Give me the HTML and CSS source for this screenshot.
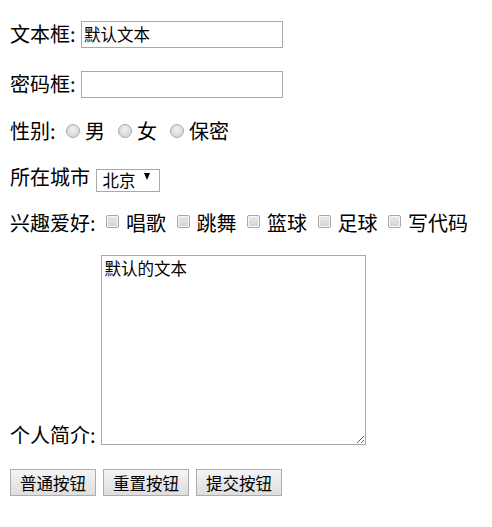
FILE: index.html
```html
<!DOCTYPE html>
<html lang="zh-CN">
<head>
<meta charset="utf-8">
<title>表单</title>
<link rel="stylesheet" href="styles.css">
</head>
<body>
<form class="form">
  <div class="row row-input">文本框:&nbsp;<input class="field" type="text" value="默认文本"></div>
  <div class="row row-input">密码框:&nbsp;<input class="field" type="password"></div>
  <div class="row row-radio">性别:&nbsp;<input class="radio" type="radio" name="sex">男&nbsp;<input class="radio" type="radio" name="sex">女&nbsp;<input class="radio" type="radio" name="sex">保密</div>
  <div class="row row-select">所在城市&nbsp;<span class="select-wrap"><select class="select"><option>北京</option><option>上海</option><option>广州</option></select></span></div>
  <div class="row row-check">兴趣爱好:&nbsp;<input class="check" type="checkbox">唱歌&nbsp;<input class="check" type="checkbox">跳舞&nbsp;<input class="check" type="checkbox">篮球&nbsp;<input class="check" type="checkbox">足球&nbsp;<input class="check" type="checkbox">写代码</div>
  <div class="row row-area"><span class="area-label">个人简介:</span><textarea class="area">默认的文本</textarea></div>
  <div class="row row-buttons">
    <button class="btn" type="button">普通按钮</button>
    <button class="btn" type="reset">重置按钮</button>
    <button class="btn" type="submit">提交按钮</button>
  </div>
</form>
</body>
</html>
```

FILE: styles.css
```css
html, body {
  margin: 0;
  padding: 0;
}

body {
  font-family: "Noto Sans CJK SC", "Noto Sans", sans-serif;
  font-size: 20px;
  line-height: 26px;
  color: #000;
  background: #fff;
}

.form {
  display: flex;
  flex-direction: column;
  gap: 20px;
  margin: 0;
  padding: 19px 10px 0 10px;
}

.row {
  display: flex;
  align-items: center;
  white-space: nowrap;
}

.row-input { height: 30px; }
.row-radio { height: 24px; }
.row-select { height: 28px; }
.row-check { height: 24px; }
.row-area {
  align-items: flex-end;
  height: 190px;
}
.row-buttons {
  gap: 7px;
  height: 27px;
  margin-top: 4px;
}

.field {
  box-sizing: border-box;
  width: 202px;
  height: 27px;
  margin: 0 0 0 1px;
  padding: 1px 2px;
  border: 1px solid #a9a9a9;
  font-family: "Noto Sans CJK SC", sans-serif;
  font-size: 16.5px;
  color: #000;
  outline: none;
}

.radio {
  appearance: none;
  -webkit-appearance: none;
  box-sizing: border-box;
  flex: none;
  width: 14px;
  height: 14px;
  margin: 0 5px 1px 6px;
  border: 1px solid #a9a9a9;
  border-radius: 50%;
  background: radial-gradient(circle at 50% 40%, #f2f2f2 0%, #d8d8d8 70%, #cbcbcb 100%);
}

.radio ~ .radio {
  margin-left: 8.5px;
}

.check {
  appearance: none;
  -webkit-appearance: none;
  box-sizing: border-box;
  flex: none;
  width: 13px;
  height: 13px;
  margin: 0 7px 3px 6px;
  border: 1px solid #a8a8a8;
  border-radius: 2px;
  background: linear-gradient(#e9e9e9, #d3d3d3);
  box-shadow: inset 0 0 0 1px #f7f7f7;
}

.select-wrap {
  position: relative;
  display: inline-block;
  margin-left: 2px;
  height: 23px;
}

.select {
  appearance: none;
  -webkit-appearance: none;
  box-sizing: border-box;
  width: 64px;
  height: 23px;
  margin: 0;
  padding: 0 0 0 5px;
  border: 1px solid #a9a9a9;
  border-radius: 0;
  background: #fff;
  font-family: "Noto Sans CJK SC", sans-serif;
  font-size: 16.5px;
  line-height: 21px;
  color: #000;
}

.select-wrap::after {
  content: "";
  position: absolute;
  right: 10px;
  top: 7px;
  border-left: 3.5px solid transparent;
  border-right: 3.5px solid transparent;
  border-top: 7px solid #000;
  pointer-events: none;
}

.area-label {
  margin-bottom: -3px;
}

.area {
  box-sizing: border-box;
  width: 265px;
  height: 190px;
  margin: 0 0 0 5px;
  padding: 2px 3px;
  border: 1px solid #a9a9a9;
  font-family: "Noto Sans CJK SC", sans-serif;
  font-size: 16.5px;
  line-height: 20px;
  color: #000;
  resize: both;
}

.btn {
  box-sizing: border-box;
  height: 27px;
  margin: 0;
  padding: 0 9px;
  border: 1px solid #adadad;
  border-radius: 0;
  background: linear-gradient(#f4f4f4, #dddddd);
  font-family: "Noto Sans CJK SC", sans-serif;
  font-size: 16.5px;
  line-height: 24px;
  color: #000;
}
```
